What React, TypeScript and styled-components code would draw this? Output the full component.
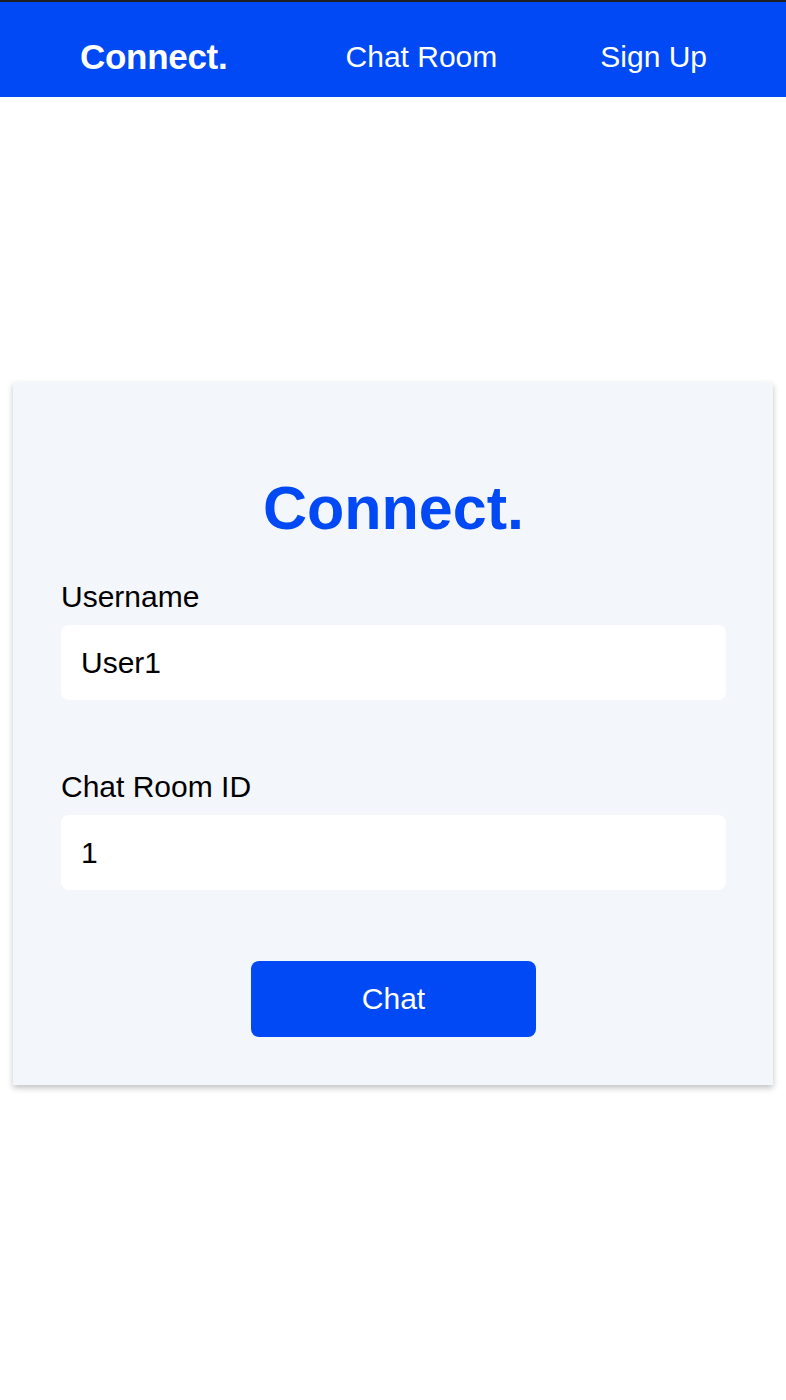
import React from "react";
import styled, { createGlobalStyle } from "styled-components";

const BLUE = "#0049F5";

const GlobalStyle = createGlobalStyle`
  html, body {
    margin: 0;
    padding: 0;
    background: #ffffff;
    font-family: "Liberation Sans", Arial, Helvetica, sans-serif;
  }
  * { box-sizing: border-box; }
`;

const Header = styled.header`
  height: 97px;
  border-top: 2px solid #1e1f22;
  background: ${BLUE};
  padding: 14px 79px 0 80px;
  display: flex;
  align-items: center;
  justify-content: space-between;
`;

const Logo = styled.a`
  color: #ffffff;
  font-size: 35px;
  line-height: 40px;
  font-weight: 700;
  text-decoration: none;
  letter-spacing: -0.3px;
`;

const NavLinks = styled.nav`
  display: flex;
  align-items: center;
  gap: 103px;
`;

const NavLink = styled.a`
  color: #ffffff;
  font-size: 30px;
  line-height: 34px;
  text-decoration: none;
`;

const Main = styled.main`
  padding: 285px 13px 315px 13px;
`;

const Card = styled.form`
  background: #f3f6fb;
  box-shadow: 0 3px 6px rgba(0, 0, 0, 0.24);
  padding: 91px 47px 48px 48px;
  display: flex;
  flex-direction: column;
`;

const Title = styled.h1`
  margin: 0 0 38px 0;
  text-align: center;
  color: ${BLUE};
  font-size: 61px;
  line-height: 70px;
  font-weight: 700;
`;

const Field = styled.div`
  display: flex;
  flex-direction: column;
  gap: 12px;
  margin-bottom: 71px;
`;

const Label = styled.label`
  color: #000000;
  font-size: 30px;
  line-height: 32px;
`;

const Input = styled.input`
  height: 75px;
  border: none;
  outline: none;
  border-radius: 8px;
  background: #ffffff;
  padding: 0 20px;
  font-family: "Liberation Sans", Arial, Helvetica, sans-serif;
  font-size: 30px;
  color: #000000;
`;

const Button = styled.button`
  align-self: center;
  width: 285px;
  height: 76px;
  border: none;
  border-radius: 8px;
  background: ${BLUE};
  color: #ffffff;
  font-family: "Liberation Sans", Arial, Helvetica, sans-serif;
  font-size: 30px;
  cursor: pointer;
`;

export default function App() {
  return (
    <>
      <GlobalStyle />
      <Header>
        <Logo href="#">Connect.</Logo>
        <NavLinks>
          <NavLink href="#">Chat Room</NavLink>
          <NavLink href="#">Sign Up</NavLink>
        </NavLinks>
      </Header>
      <Main>
        <Card onSubmit={(e) => e.preventDefault()}>
          <Title>Connect.</Title>
          <Field>
            <Label htmlFor="username">Username</Label>
            <Input id="username" defaultValue="User1" />
          </Field>
          <Field>
            <Label htmlFor="room">Chat Room ID</Label>
            <Input id="room" defaultValue="1" />
          </Field>
          <Button type="submit">Chat</Button>
        </Card>
      </Main>
    </>
  );
}
